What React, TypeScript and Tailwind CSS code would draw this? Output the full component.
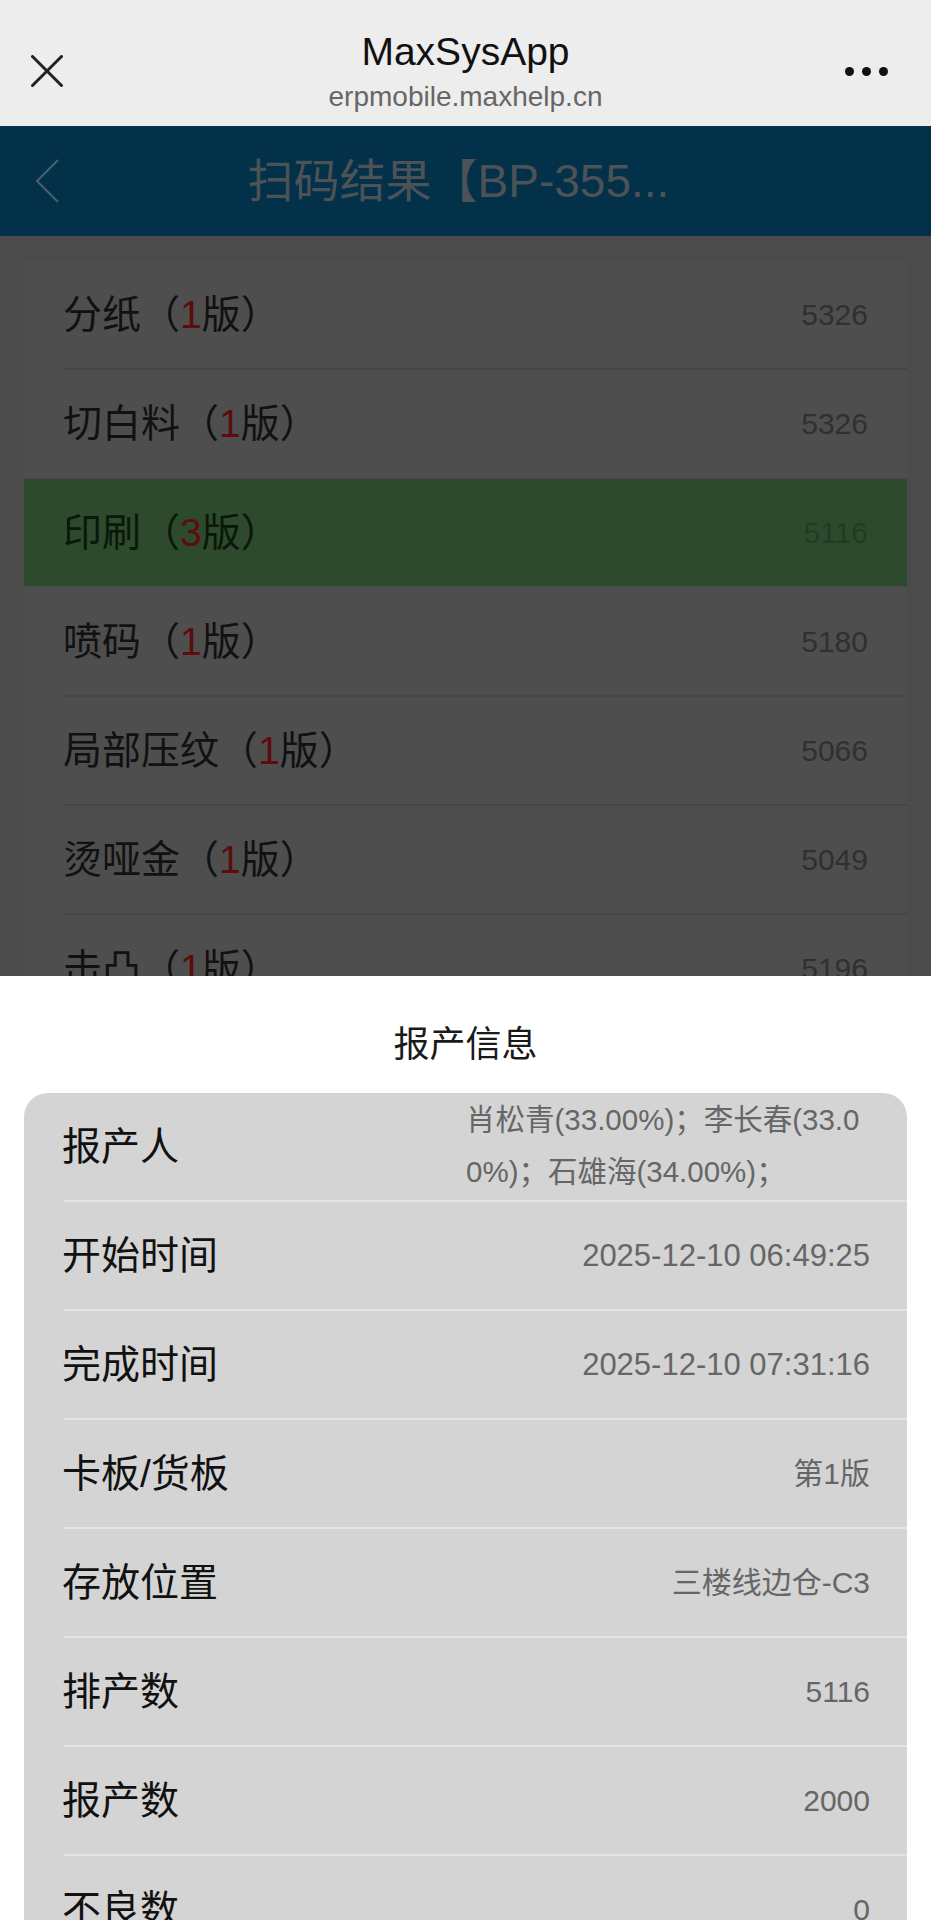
import React from "react";

const FONT = { fontFamily: '"Liberation Sans", "Noto Sans CJK SC", sans-serif' };

const items = [
  { name: "分纸", n: "1", v: "5326" },
  { name: "切白料", n: "1", v: "5326" },
  { name: "印刷", n: "3", v: "5116", active: true },
  { name: "喷码", n: "1", v: "5180" },
  { name: "局部压纹", n: "1", v: "5066" },
  { name: "烫哑金", n: "1", v: "5049" },
  { name: "击凸", n: "1", v: "5196" },
  { name: "模切", n: "1", v: "5190" },
];

const infos: { k: string; v: string; big?: boolean }[] = [
  { k: "开始时间", v: "2025-12-10 06:49:25", big: true },
  { k: "完成时间", v: "2025-12-10 07:31:16", big: true },
  { k: "卡板/货板", v: "第1版" },
  { k: "存放位置", v: "三楼线边仓-C3" },
  { k: "排产数", v: "5116" },
  { k: "报产数", v: "2000" },
  { k: "不良数", v: "0" },
  { k: "备注", v: "" },
];

export default function App() {
  return (
    <div className="w-[931px] h-[1920px] overflow-hidden bg-white flex flex-col" style={FONT}>
      {/* WeChat top bar */}
      <div className="h-[126px] bg-[#ededed] flex items-start justify-between shrink-0">
        <div className="w-[93px] h-[126px] flex items-start pl-[31px] pt-[55px]">
          <svg width="32" height="32" viewBox="0 0 32 32">
            <line x1="1.5" y1="1.5" x2="30.5" y2="30.5" stroke="#222" strokeWidth="3" strokeLinecap="round" />
            <line x1="30.5" y1="1.5" x2="1.5" y2="30.5" stroke="#222" strokeWidth="3" strokeLinecap="round" />
          </svg>
        </div>
        <div className="flex flex-col items-center pt-[29px]">
          <div className="text-[39px] leading-[46px] text-[#111]">MaxSysApp</div>
          <div className="text-[28px] leading-[34px] text-[#666] mt-[5px]">erpmobile.maxhelp.cn</div>
        </div>
        <div className="w-[93px] h-[126px] flex items-start pt-[67px] pl-[7px] gap-[8px]">
          <div className="w-[9px] h-[9px] rounded-full bg-[#111]" />
          <div className="w-[9px] h-[9px] rounded-full bg-[#111]" />
          <div className="w-[9px] h-[9px] rounded-full bg-[#111]" />
        </div>
      </div>

      {/* Dimmed page behind the sheet */}
      <div className="h-[850px] overflow-hidden bg-[#4b4b4b] flex flex-col shrink-0">
        <div className="h-[2px] bg-[#cde0ea]" />
        <div className="h-[110px] bg-[#03314a] flex items-center shrink-0">
          <div className="w-[93px] flex items-center pl-[35px]">
            <svg width="26" height="46" viewBox="0 0 26 46">
              <polyline points="23,2 2,23 23,44" fill="none" stroke="#4a5f6c" strokeWidth="2" />
            </svg>
          </div>
          <div className="flex-1 text-center pr-[107px] text-[46px] leading-[52px] text-[#4c5256]">
            扫码结果【BP-355...
          </div>
        </div>
        <div className="pt-[25px] px-[24px]">
          <div className="bg-[#4e4e4e] flex flex-col">
            {items.map((it, i) => (
              <div key={i} className="flex flex-col">
                {i > 0 && (
                  <div className={it.active || items[i - 1].active ? "h-[2px] bg-[#4b4b4b]" : "h-[2px] ml-[40px] bg-[#464646]"} />
                )}
                <div
                  className={
                    "h-[107px] flex items-center justify-between pl-[39px] pr-[39px] " +
                    (it.active ? "bg-[#2d4a2c]" : "")
                  }
                >
                  <div className={"text-[39px] leading-[44px] " + (it.active ? "text-[#0b170b]" : "text-[#111]")}>
                    {it.name}（<span className={it.active ? "text-[#5e0c0c]" : "text-[#5c0c0c]"}>{it.n}</span>版）
                  </div>
                  <div className={"text-[30px] leading-[36px] " + (it.active ? "text-[#253a25]" : "text-[#303030]")}>
                    {it.v}
                  </div>
                </div>
              </div>
            ))}
          </div>
        </div>
      </div>

      {/* Bottom sheet */}
      <div className="bg-white flex flex-col">
        <div className="h-[117px] flex items-center justify-center">
          <div className="text-[36px] leading-[44px] text-[#1a1a1a] pt-[20px]">报产信息</div>
        </div>
        <div className="mx-[24px] bg-[#d4d4d4] rounded-t-[24px] flex flex-col">
          <div className="h-[107px] flex items-center justify-between pl-[38px] pr-[37px]">
            <div className="text-[39px] leading-[44px] text-[#111]">报产人</div>
            <div className="w-[404px] text-[29.5px] leading-[52px] text-[#666] text-left -mt-[2px]">
              <div className="whitespace-nowrap">肖松青(33.00%)；李长春(33.0</div>
              <div className="whitespace-nowrap">0%)；石雄海(34.00%)；</div>
            </div>
          </div>
          {infos.map((r, i) => (
            <div key={i} className="flex flex-col">
              <div className="h-[2px] ml-[40px] bg-[#e3e3e3]" />
              <div className="h-[107px] flex items-center justify-between pl-[38px] pr-[37px]">
                <div className="text-[39px] leading-[44px] text-[#111]">{r.k}</div>
                <div className={(r.big ? "text-[31px]" : "text-[30px]") + " leading-[36px] text-[#666]"}>{r.v}</div>
              </div>
            </div>
          ))}
        </div>
      </div>
    </div>
  );
}
